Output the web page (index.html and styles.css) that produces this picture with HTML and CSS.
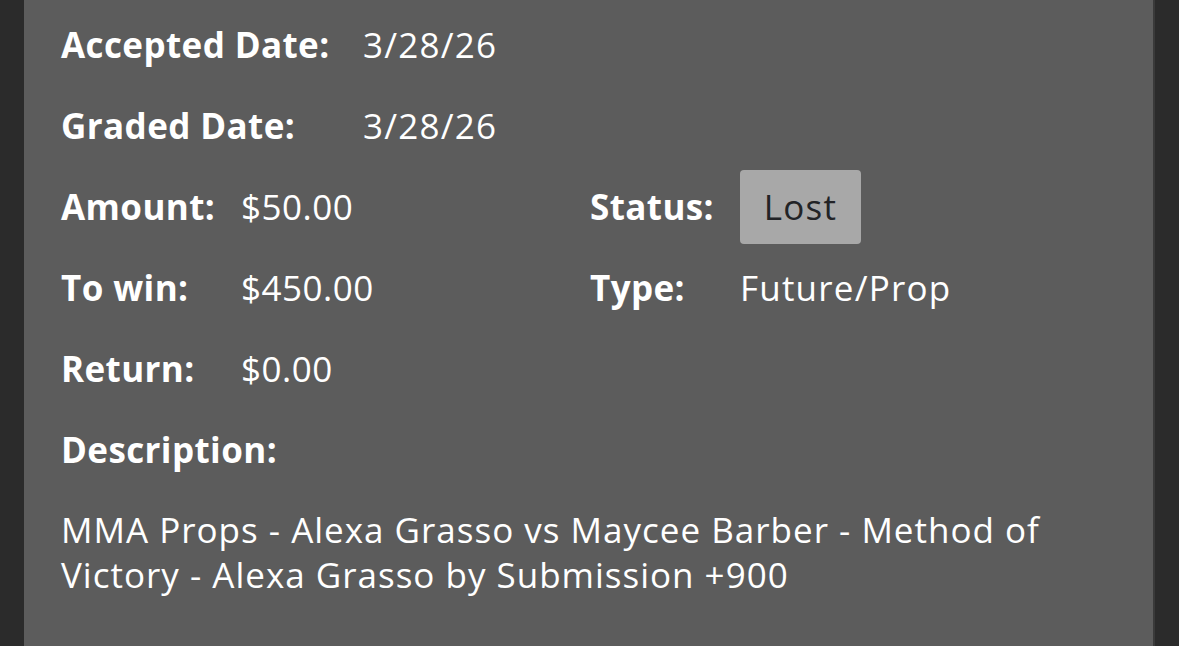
FILE: index.html
```html
<!DOCTYPE html>
<html>
<head>
<meta charset="utf-8">
<link rel="stylesheet" href="styles.css">
</head>
<body>
<div class="frame">
  <div class="panel">
    <div class="row wide">
      <span class="label">Accepted Date:</span>
      <span class="value">3/28/26</span>
    </div>
    <div class="row wide">
      <span class="label">Graded Date:</span>
      <span class="value">3/28/26</span>
    </div>
    <div class="row pair">
      <span class="label">Amount:</span>
      <span class="value num">$50.00</span>
      <span class="label">Status:</span>
      <span class="value"><span class="badge">Lost</span></span>
    </div>
    <div class="row pair">
      <span class="label">To win:</span>
      <span class="value num">$450.00</span>
      <span class="label">Type:</span>
      <span class="value">Future/Prop</span>
    </div>
    <div class="row pair">
      <span class="label">Return:</span>
      <span class="value num">$0.00</span>
    </div>
    <div class="row">
      <span class="label">Description:</span>
    </div>
    <p class="desc">MMA Props - Alexa Grasso vs Maycee Barber - Method of Victory - Alexa Grasso by Submission +900</p>
  </div>
</div>
</body>
</html>
```

FILE: styles.css
```css
html, body {
  margin: 0;
  padding: 0;
  height: 100%;
  overflow: hidden;
}
body {
  background: #2b2b2b;
  font-family: "Open Sans", "Noto Sans", sans-serif;
  color: #ffffff;
}
.frame {
  display: flex;
  height: 646px;
  padding-left: 24px;
  background: #2b2b2b;
}
.panel {
  width: 1131px;
  background: #5c5c5c;
  border-right: 2px solid #3a3a3a;
  padding: 4px 0 0 37px;
  box-sizing: border-box;
}
.row {
  display: grid;
  height: 81px;
  align-items: center;
  font-size: 35px;
  line-height: 81px;
}
.row.wide {
  grid-template-columns: 302px auto;
}
.row.pair {
  grid-template-columns: 180px 349px 150px auto;
}
.label {
  font-weight: 700;
  white-space: nowrap;
  letter-spacing: 0.4px;
}
.value {
  font-weight: 400;
  white-space: nowrap;
  display: flex;
  align-items: center;
  letter-spacing: 1.2px;
}
.value.num {
  letter-spacing: 0.5px;
}
.badge {
  display: inline-flex;
  align-items: center;
  justify-content: center;
  width: 121px;
  height: 74px;
  line-height: 74px;
  background: #a8a8a8;
  color: #222326;
  border-radius: 4px;
}
.desc {
  margin: 17px 0 0 0;
  font-size: 35px;
  line-height: 45px;
  letter-spacing: 1px;
  width: 1020px;
}
```
